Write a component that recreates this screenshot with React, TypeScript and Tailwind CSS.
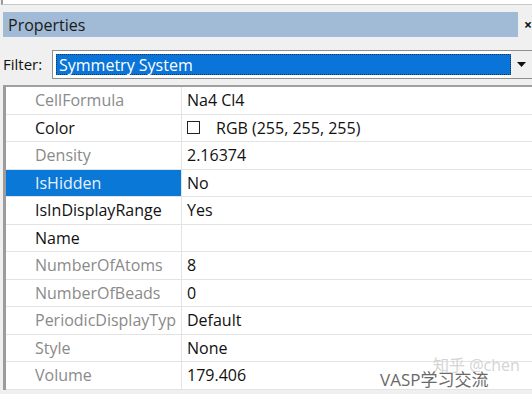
const rows: { name: string; value: string; readOnly?: boolean; selected?: boolean; swatch?: boolean }[] = [
  { name: "CellFormula", value: "Na4 Cl4", readOnly: true },
  { name: "Color", value: "RGB (255, 255, 255)", swatch: true },
  { name: "Density", value: "2.16374", readOnly: true },
  { name: "IsHidden", value: "No", selected: true },
  { name: "IsInDisplayRange", value: "Yes" },
  { name: "Name", value: "" },
  { name: "NumberOfAtoms", value: "8", readOnly: true },
  { name: "NumberOfBeads", value: "0", readOnly: true },
  { name: "PeriodicDisplayTyp", value: "Default", readOnly: true },
  { name: "Style", value: "None", readOnly: true },
  { name: "Volume", value: "179.406", readOnly: true },
];

function PropertyRow({ row }: { row: (typeof rows)[number] }) {
  const nameColor = row.selected
    ? "bg-[#0a78d7] text-[#e8f1fb]"
    : row.readOnly
      ? "text-[#8a8a8a]"
      : "text-[#111]";
  return (
    <div className="flex h-[27.5px] border-b border-[#e3e3e3] bg-white">
      <div
        className={`w-[176px] shrink-0 pl-[29px] flex items-center whitespace-nowrap overflow-hidden border-r border-[#e3e3e3] ${nameColor}`}
      >
        {row.name}
      </div>
      <div className="flex-1 pl-[5px] flex items-center text-[#111] whitespace-nowrap">
        {row.swatch && <span className="w-[13px] h-[13px] border border-[#222] bg-white mr-[16px]" />}
        {row.value}
      </div>
    </div>
  );
}

export default function App() {
  return (
    <div
      className="relative w-[532px] h-[394px] overflow-hidden bg-[#f0f0f0] text-[16px] leading-none"
      style={{ fontFamily: '"Open Sans", "Noto Sans", "Noto Sans CJK SC", sans-serif' }}
    >
      {/* strip of the panel above */}
      <div className="h-[5px] bg-white border-b border-[#c8c8c8] border-l-2 border-l-[#9a9a9a] ml-[1px]" />

      {/* title bar */}
      <div className="flex items-center mt-[7px]">
        <div className="ml-[3px] w-[515px] h-[25px] bg-[#a1bad5] flex items-center pl-[5px] text-[#1a1a1a]">
          Properties
        </div>
        <span className="ml-[6px] text-[14px] font-bold text-[#111]">×</span>
      </div>

      {/* filter */}
      <div className="flex items-center mt-[13px] h-[29px]">
        <span className="pl-[3px] w-[52px] text-[15px] text-[#111]">Filter:</span>
        <div className="flex-1 h-[29px] flex border border-[#8f8f8f] border-r-0 bg-white p-[3px] pr-0">
          <div className="flex-1 bg-[#0a74d8] border border-dotted border-[#15375c] flex items-center pl-[2px] text-white">
            Symmetry System
          </div>
          <div className="w-[21px] flex items-center justify-center bg-[#f0f0f0] -my-[3px]">
            <svg width="9" height="5" viewBox="0 0 9 5">
              <path d="M0 0H9L4.5 5Z" fill="#111" />
            </svg>
          </div>
        </div>
      </div>

      {/* grid */}
      <div className="mt-[6px] ml-[3px] border-t-2 border-t-[#a0a0a0] border-l-[3px] border-l-[#9c9c9c] bg-white">
        {rows.map((r) => (
          <PropertyRow key={r.name} row={r} />
        ))}
      </div>

      {/* watermark */}
      <div className="absolute left-[433px] top-[357px] text-[16px] text-[#d4d4d4]">知乎 @chen</div>
      <div className="absolute left-[380px] top-[371px] text-[17px] text-[#6a6a6a]">VASP学习交流</div>
    </div>
  );
}
